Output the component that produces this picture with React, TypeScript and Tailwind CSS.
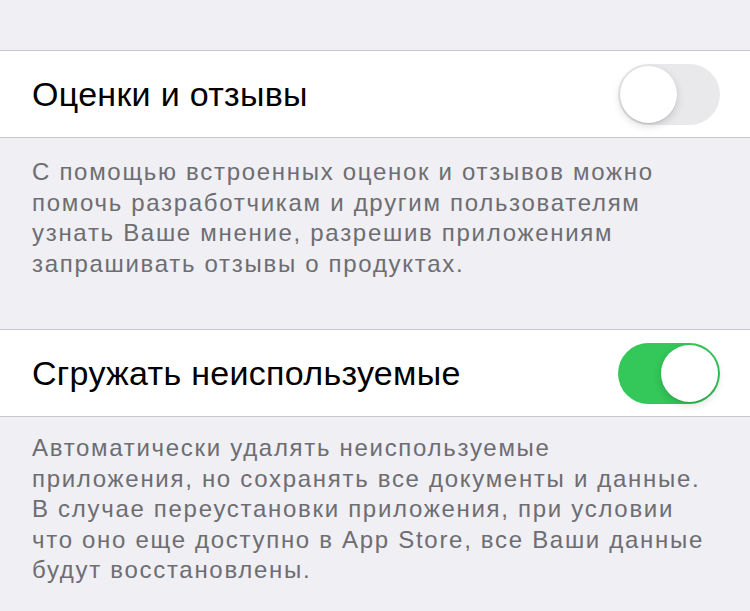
import { useState } from "react";

function Toggle({ on, onClick }: { on: boolean; onClick: () => void }) {
  return (
    <button
      onClick={onClick}
      className={`relative w-[102px] h-[61px] rounded-full shrink-0 transition-colors ${
        on ? "bg-[#34c759]" : "bg-[#e9e9eb]"
      }`}
    >
      <span
        className={`absolute top-[2px] w-[57px] h-[57px] rounded-full bg-white shadow-[0_3px_8px_rgba(0,0,0,0.15),0_1px_1px_rgba(0,0,0,0.1)] transition-all ${
          on ? "left-[43px]" : "left-[2px]"
        }`}
      />
    </button>
  );
}

function Section({
  title,
  footer,
  on,
  onToggle,
  footerClass,
}: {
  title: string;
  footer: string[];
  on: boolean;
  onToggle: () => void;
  footerClass: string;
}) {
  return (
    <div>
      <div className="flex items-center justify-between h-[88px] bg-white border-y border-[#c8c7cc] pl-[32px] pr-[30px]">
        <span className="text-[34px] text-black tracking-[0.3px]">{title}</span>
        <Toggle on={on} onClick={onToggle} />
      </div>
      <div
        className={`px-[32px] text-[24px] leading-[30.5px] text-[#6d6d72] tracking-[1.7px] ${footerClass}`}
      >
        {footer.map((l) => (
          <div key={l} className="whitespace-nowrap">
            {l}
          </div>
        ))}
      </div>
    </div>
  );
}

export default function App() {
  const [ratings, setRatings] = useState(false);
  const [offload, setOffload] = useState(true);

  return (
    <main
      className="w-[750px] h-[611px] overflow-hidden bg-[#efeff4] pt-[50px]"
      style={{ fontFamily: '"Liberation Sans", Arial, sans-serif' }}
    >
      <Section
        title="Оценки и отзывы"
        on={ratings}
        onToggle={() => setRatings(!ratings)}
        footerClass="h-[191px] pt-[19px]"
        footer={[
          "С помощью встроенных оценок и отзывов можно",
          "помочь разработчикам и другим пользователям",
          "узнать Ваше мнение, разрешив приложениям",
          "запрашивать отзывы о продуктах.",
        ]}
      />
      <Section
        title="Сгружать неиспользуемые"
        on={offload}
        onToggle={() => setOffload(!offload)}
        footerClass="pt-[16px]"
        footer={[
          "Автоматически удалять неиспользуемые",
          "приложения, но сохранять все документы и данные.",
          "В случае переустановки приложения, при условии",
          "что оно еще доступно в App Store, все Ваши данные",
          "будут восстановлены.",
        ]}
      />
    </main>
  );
}
